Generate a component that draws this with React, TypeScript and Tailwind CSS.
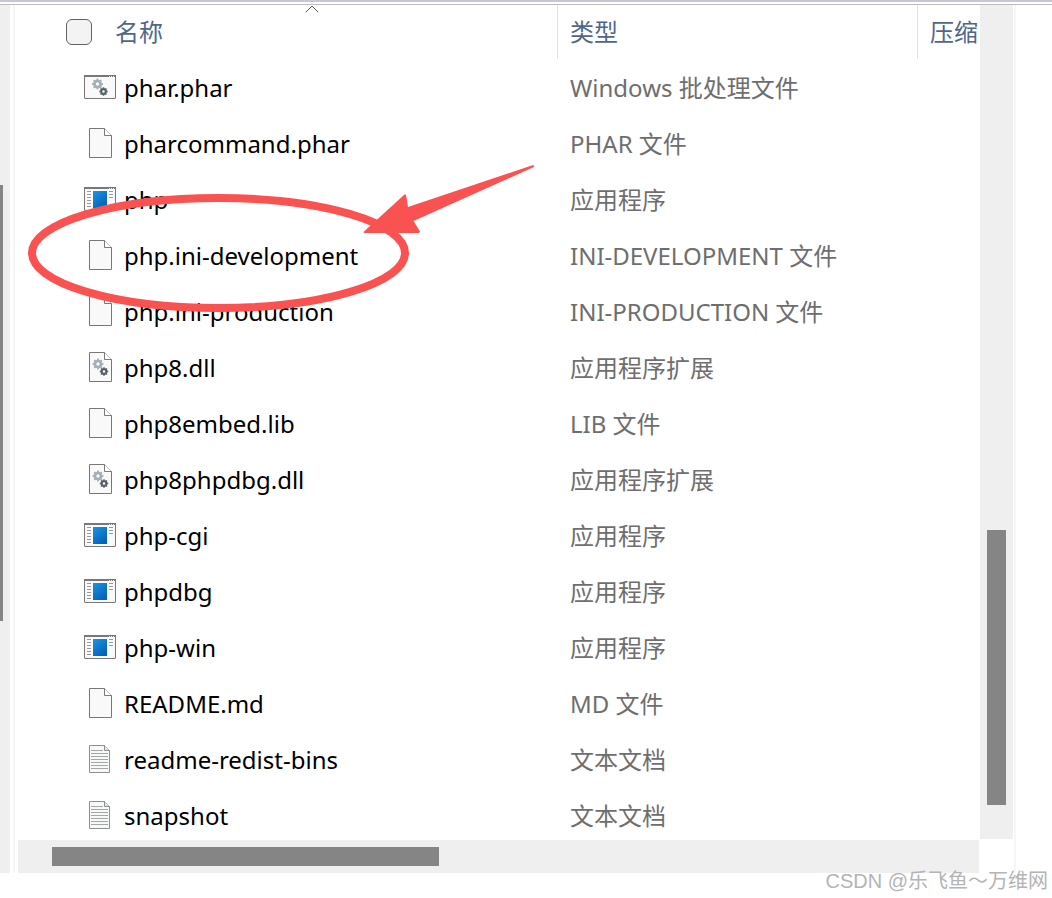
type IconKind = "batch" | "file" | "app" | "dll" | "text";

interface Entry {
  name: string;
  type: string;
  icon: IconKind;
}

const entries: Entry[] = [
  { name: "phar.phar", type: "Windows 批处理文件", icon: "batch" },
  { name: "pharcommand.phar", type: "PHAR 文件", icon: "file" },
  { name: "php", type: "应用程序", icon: "app" },
  { name: "php.ini-development", type: "INI-DEVELOPMENT 文件", icon: "file" },
  { name: "php.ini-production", type: "INI-PRODUCTION 文件", icon: "file" },
  { name: "php8.dll", type: "应用程序扩展", icon: "dll" },
  { name: "php8embed.lib", type: "LIB 文件", icon: "file" },
  { name: "php8phpdbg.dll", type: "应用程序扩展", icon: "dll" },
  { name: "php-cgi", type: "应用程序", icon: "app" },
  { name: "phpdbg", type: "应用程序", icon: "app" },
  { name: "php-win", type: "应用程序", icon: "app" },
  { name: "README.md", type: "MD 文件", icon: "file" },
  { name: "readme-redist-bins", type: "文本文档", icon: "text" },
  { name: "snapshot", type: "文本文档", icon: "text" },
];

const teeth = [0, 45, 90, 135, 180, 225, 270, 315];

function Gear({ x, y, r, color }: { x: number; y: number; r: number; color: string }) {
  return (
    <g transform={`translate(${x} ${y})`}>
      <circle r={r * 0.56} fill="none" stroke={color} strokeWidth={r * 0.5} />
      {teeth.map((angle) => (
        <rect
          key={angle}
          x={-r * 0.19}
          y={-r}
          width={r * 0.38}
          height={r * 0.34}
          fill={color}
          transform={`rotate(${angle})`}
        />
      ))}
    </g>
  );
}

function Page() {
  return (
    <>
      <path d="M5.5.5H20.5L27.5 7.5V29.5H5.5Z" fill="#f9f9f9" stroke="#7a7774" />
      <path d="M20.5.5V7.5H27.5" fill="#fff" stroke="#7a7774" />
    </>
  );
}

function WindowFrame() {
  return (
    <>
      <rect x=".5" y="3.5" width="31" height="23" rx=".5" fill="#f9f9f9" stroke="#7a7774" />
      <path d="M0 4H32" stroke="#7a7774" strokeWidth="2" />
      <path d="M25 4.5H31" stroke="#e4e4e4" strokeDasharray="1 1" />
    </>
  );
}

function FileIcon({ kind }: { kind: IconKind }) {
  return (
    <svg viewBox="0 0 32 32" className="size-8 shrink-0" aria-hidden="true">
      {kind === "file" && <Page />}
      {kind === "dll" && (
        <>
          <Page />
          <Gear x={14} y={12} r={5.4} color="#a3afb9" />
          <Gear x={20} y={19.5} r={4.2} color="#566066" />
        </>
      )}
      {kind === "batch" && (
        <>
          <WindowFrame />
          <Gear x={13.5} y={12} r={5.4} color="#a3afb9" />
          <Gear x={19.5} y={19.5} r={4.2} color="#566066" />
        </>
      )}
      {kind === "app" && (
        <>
          <defs>
            <linearGradient id="screen" x1="0" y1="0" x2=".6" y2="1">
              <stop offset="0" stopColor="#1b95e2" />
              <stop offset="1" stopColor="#0463b8" />
            </linearGradient>
          </defs>
          <WindowFrame />
          <rect x="9" y="7" width="14" height="17" fill="url(#screen)" />
          <path
            d="M3 7.5H7M3 10.5H7M3 13.5H7M3 16.5H7M3 19.5H7M3 22.5H7M25 7.5H29M25 10.5H29M25 13.5H29"
            stroke="#99999b"
          />
        </>
      )}
      {kind === "text" && (
        <>
          <path d="M5.5 1.5H20.5L25.5 6.5V28.5H5.5Z" fill="#f7f8f8" stroke="#8d8f90" />
          <path d="M20.5 1.5V6.5H25.5" fill="#e4e6e8" stroke="#8d8f90" />
          <path
            d="M7 6.5H19M7 9.5H24M7 12.5H24M7 15.5H24M7 18.5H24M7 21.5H24M7 24.5H24"
            stroke="#a3a5a7"
          />
        </>
      )}
    </svg>
  );
}

function Annotation() {
  return (
    <svg
      viewBox="0 0 520 160"
      className="pointer-events-none absolute top-[155px] left-0 h-40 w-[520px]"
      fill="#fa5251"
      aria-hidden="true"
    >
      <ellipse cx="200.5" cy="93" rx="186.5" ry="55" fill="none" stroke="#fa5251" strokeWidth="8" />
      <path
        d="M345.5 72L386.5 34.5L388 34.5L390 47L514.5 5.2Q516.8 5.3 516 7L395.5 61L402 71.5L401 73H346Z"
      />
    </svg>
  );
}

export default function App() {
  return (
    <div className="relative flex h-screen flex-col overflow-hidden bg-white pb-[25px] font-['Noto_Sans','Noto_Sans_CJK_SC',sans-serif] text-2xl">
      <div className="h-[5px] shrink-0 border-t-2 border-b border-t-[#c6c7d5] border-b-[#bebebe]" />
      <div className="flex min-h-0 flex-1">
        <div className="w-2.5 shrink-0 bg-[#efefef] pt-[180px]">
          <div className="h-[436px] w-[3px] bg-[#858585]" />
        </div>
        <div className="mr-[3px] ml-[3px] w-0.5 shrink-0 bg-[#f6f6f6]" />

        <main className="flex min-w-0 flex-1 flex-col">
          <div className="relative min-h-0 flex-1 overflow-hidden">
            <table className="w-full table-fixed border-collapse text-left">
              <colgroup>
                <col className="w-[540px]" />
                <col className="w-[360px]" />
                <col />
              </colgroup>
              <thead className="align-top text-[#4f6789]">
                <tr className="h-[55px]">
                  <th className="relative p-0 pl-12 align-top font-normal">
                    <div className="flex h-[54px] items-center gap-[23px] border-r border-[#e3e3e3]">
                      <input
                        type="checkbox"
                        aria-label="全选"
                        className="size-[26px] appearance-none rounded-md border border-[#626262] bg-[#f3f3f3]"
                      />
                      <button>名称</button>
                    </div>
                    <svg
                      viewBox="0 0 14 8"
                      className="absolute top-0 left-[287px] h-2 w-3.5"
                      fill="none"
                      stroke="#555"
                      aria-hidden="true"
                    >
                      <path d="M.7 7.3L7 1L13.3 7.3" />
                    </svg>
                  </th>
                  <th className="p-0 align-top font-normal">
                    <div className="flex h-[54px] items-center border-r border-[#e3e3e3] pl-3">
                      <button>类型</button>
                    </div>
                  </th>
                  <th className="overflow-hidden p-0 align-top font-normal">
                    <div className="flex h-[54px] items-center pl-3">
                      <button className="whitespace-nowrap">压缩</button>
                    </div>
                  </th>
                </tr>
              </thead>
              <tbody>
                {entries.map((entry) => (
                  <tr key={entry.name} className="h-14">
                    <td className="p-0 pl-[66px] text-black">
                      <div className="flex items-center gap-2">
                        <FileIcon kind={entry.icon} />
                        <span>{entry.name}</span>
                      </div>
                    </td>
                    <td className="p-0 pl-3 whitespace-nowrap text-[#6e6e6e]">{entry.type}</td>
                    <td className="p-0" />
                  </tr>
                ))}
              </tbody>
            </table>
            <Annotation />
          </div>
          <div className="h-[33px] shrink-0 bg-[#efefef] py-[7px] pl-[34px]">
            <div className="h-[19px] w-[387px] bg-[#858585]" />
          </div>
        </main>

        <div className="mb-[34px] ml-px w-[33px] shrink-0 bg-[#efefef] px-[7px] pt-[525px]">
          <div className="h-[275px] bg-[#858585]" />
        </div>
        <div className="mr-9 ml-px w-0.5 shrink-0 bg-[#f6f6f6]" />
      </div>
      <p className="absolute right-1 bottom-[3px] font-['Liberation_Sans','Noto_Sans_CJK_SC',sans-serif] text-xl leading-7 text-[#b4b4b4]">
        CSDN @乐飞鱼～万维网
      </p>
    </div>
  );
}
